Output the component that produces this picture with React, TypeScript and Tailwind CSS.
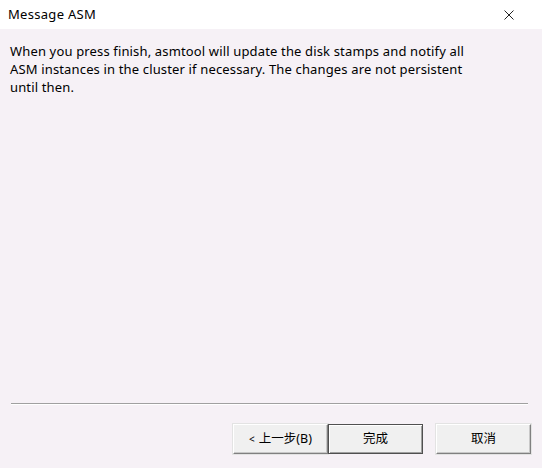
import React from "react";

const font = { fontFamily: '"Noto Sans", "Noto Sans CJK SC", sans-serif' };

function Btn({ children, def = false }: { children: React.ReactNode; def?: boolean }) {
  return (
    <div
      className={
        "flex h-[30px] w-[95px] items-center justify-center bg-[#f0f0f0] text-[12.5px] text-black " +
        (def
          ? "border border-[#505050] shadow-[inset_1px_1px_0_#ffffff,inset_-1px_-1px_0_#a0a0a0]"
          : "border-t border-l border-t-[#ffffff] border-l-[#ffffff] border-r border-b border-r-[#808080] border-b-[#808080] shadow-[inset_-1px_-1px_0_#c8c8c8,0_0_0_1px_#e3e3e3]")
      }
    >
      {children}
    </div>
  );
}

export default function App() {
  return (
    <div className="flex h-[468px] w-[542px] flex-col bg-[#f6f1f6]" style={font}>
      <div className="flex h-[29px] items-center justify-between bg-white pl-[8px] pr-[28px]">
        <span className="text-[13px] tracking-[0.3px] text-black">Message ASM</span>
        <svg width="10" height="10" viewBox="0 0 10 10">
          <path d="M0.5 0.5 L9.5 9.5 M9.5 0.5 L0.5 9.5" stroke="#222" strokeWidth="1" />
        </svg>
      </div>
      <div className="flex-1 px-[10px] pt-[13px]">
        <p className="w-[470px] text-[13px] leading-[18px] tracking-[0.15px] text-black">
          When you press finish, asmtool will update the disk stamps and notify all ASM instances in the cluster if necessary. The changes are not persistent until then.
        </p>
      </div>
      <div className="ml-[11px] mr-[14px] h-[2px] border-t border-[#a0a0a0] border-b-white border-b"></div>
      <div className="flex justify-end gap-[13px] pr-[11px] pt-[19px] pb-[14px]">
        <div className="flex">
          <Btn>
            <span className="mr-[4px] text-[10px]">&lt;</span>上一步(B)
          </Btn>
          <Btn def>完成</Btn>
        </div>
        <Btn>取消</Btn>
      </div>
    </div>
  );
}
